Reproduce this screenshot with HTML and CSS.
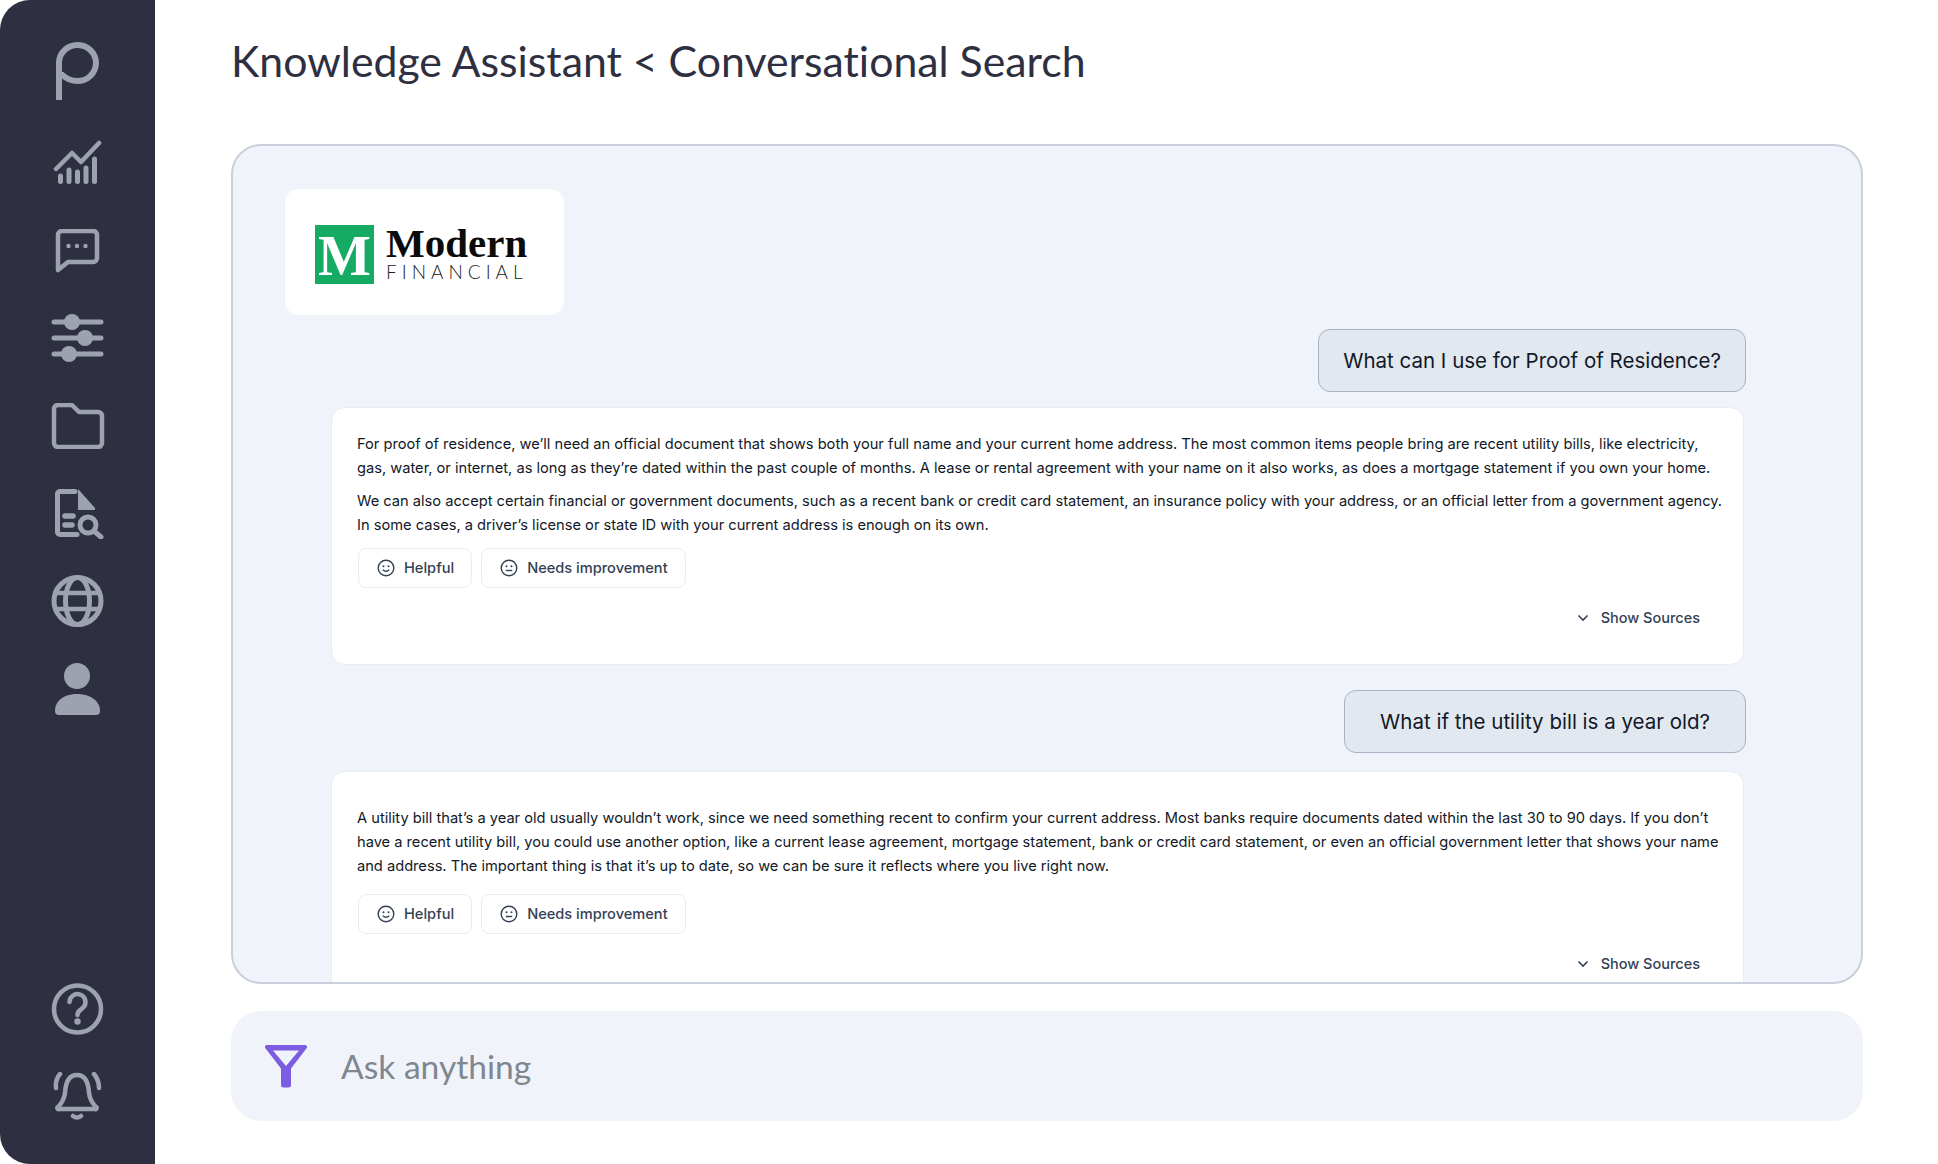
FILE: index.html
```html
<!DOCTYPE html>
<html>
<head>
    <meta charset="UTF-8">
    <title>Knowledge Assistant</title>

    <link rel="stylesheet" href="styles.css">
</head>
<body>
    <div class="app">
        <nav class="sidebar">
            <div class="nav-top">
                <svg class="nav-logo" width="155" height="58" viewBox="0 42 155 58">
                    <path class="line" stroke-width="6" stroke-linecap="butt" d="M59 100 V62 a18.5 18 0 1 1 18.5 19 q-9 0 -15 -6"></path>
                </svg>
                <svg class="nav-icon" width="155" height="46" viewBox="0 140 155 46">
                    <path class="line" stroke-width="4.500" d="M56 169 L72 153 L81 162 L99 143"></path>
                    <path class="line" stroke-width="5" d="M60.500 176 V181.500 M69 170 V181.500 M77.500 172 V181.500 M86 168 V181.500 M94.500 159 V181.500"></path>
                </svg>
                <svg class="nav-icon chat" width="155" height="44" viewBox="0 229 155 44">
                    <path class="line" stroke-width="4.500" d="M62 231 H93 a4 4 0 0 1 4 4 V258 a4 4 0 0 1 -4 4 H68 L58 270 V235 a4 4 0 0 1 4 -4z"></path>
                    <circle class="solid" cx="68.500" cy="246" r="2.200"></circle>
                    <circle class="solid" cx="77" cy="246" r="2.200"></circle>
                    <circle class="solid" cx="85.500" cy="246" r="2.200"></circle>
                </svg>
                <svg class="nav-icon sliders" width="155" height="50" viewBox="0 314 155 50">
                    <path class="line" stroke-width="5" d="M54 322 H101 M54 338 H101 M54 354 H101"></path>
                    <circle class="solid" cx="72" cy="322" r="8"></circle>
                    <circle class="solid" cx="85" cy="338" r="8"></circle>
                    <circle class="solid" cx="69" cy="354" r="8"></circle>
                </svg>
                <svg class="nav-icon folder" width="155" height="46" viewBox="0 403 155 46">
                    <path class="line" stroke-width="4.500" d="M58 405 H71 a3 3 0 0 1 2 1 L79 412 H98 a4 4 0 0 1 4 4 V443 a4 4 0 0 1 -4 4 H58 a4 4 0 0 1 -4 -4 V409 a4 4 0 0 1 4 -4z"></path>
                </svg>
                <svg class="nav-icon doc" width="155" height="50" viewBox="0 489 155 50">
                    <path class="line" stroke-width="5" d="M75 491.500 H60 a2.500 2.500 0 0 0 -2.500 2.500 V532 a2.500 2.500 0 0 0 2.500 2.500 H77"></path>
                    <path class="solid" d="M78 489 L95 508 V510 H78z"></path>
                    <path class="line" stroke-width="5.500" stroke-linecap="butt" d="M65 516 H73 M65 525 H72"></path>
                    <circle class="line" stroke-width="5" cx="88" cy="525" r="8"></circle>
                    <path class="line" stroke-width="5" d="M94 531 L101 537"></path>
                </svg>
                <svg class="nav-icon globe" width="155" height="52" viewBox="0 575 155 52">
                    <circle class="line" stroke-width="5" cx="77.500" cy="601" r="23.500"></circle>
                    <ellipse class="line" stroke-width="5" cx="77.500" cy="601" rx="12" ry="23.500"></ellipse>
                    <path class="line" stroke-width="4.500" d="M56 593 H99 M56 609 H99"></path>
                </svg>
                <svg class="nav-icon person" width="155" height="52" viewBox="0 663 155 52">
                    <circle class="solid" cx="77" cy="676" r="13"></circle>
                    <path class="solid" d="M55 711 C55 700 65 694 77 694 S100 700 100 711 a4 4 0 0 1 -4 4 H59 a4 4 0 0 1 -4 -4z"></path>
                </svg>
            </div>
            <div class="nav-bottom">
                <svg class="nav-icon" width="155" height="52" viewBox="0 983 155 52">
                    <circle class="line" stroke-width="4.500" cx="77.500" cy="1009" r="23.500"></circle>
                    <path class="line" stroke-width="4.500" d="M69.500 1002 a8 8 0 1 1 12 7 q-4 2.500 -4 6"></path>
                    <circle class="solid" cx="77.500" cy="1021.500" r="3.200"></circle>
                </svg>
                <svg class="nav-icon bell" width="155" height="50" viewBox="0 1072 155 50">
                    <path class="line" stroke-width="4.500" d="M58 1107 q6 -6 7 -14 q1 -18 12 -18 t12 18 q1 8 7 14 a1 1 0 0 1 -1 2 H59 a1 1 0 0 1 -1 -2z"></path>
                    <path class="line" stroke-width="4.500" d="M60 1074 q-5 6 -4 14 M94 1074 q5 6 5 14 M73 1116 q4 3 8 0"></path>
                </svg>
            </div>
        </nav>

        <main class="main">
            <h1 class="title">Knowledge Assistant &lt; Conversational Search</h1>

            <section class="panel">
                <div class="brand">
                    <div class="brand-mark">M</div>
                    <div class="brand-name">
                        <div class="brand-top">Modern</div>
                        <div class="brand-sub">FINANCIAL</div>
                    </div>
                </div>

                <div class="thread">
                    <div class="bubble bubble-a">What can I use for Proof of Residence?</div>
                    <article class="card card-a">
                        <p>For proof of residence, we’ll need an official document that shows both your full name and your current home address. The most common items people bring are recent utility bills, like electricity, gas, water, or internet, as long as they’re dated within the past couple of months. A lease or rental agreement with your name on it also works, as does a mortgage statement if you own your home.</p>
                        <p>We can also accept certain financial or government documents, such as a recent bank or credit card statement, an insurance policy with your address, or an official letter from a government agency. In some cases, a driver’s license or state ID with your current address is enough on its own.</p>
                        <div class="actions">
                            <button class="btn">
                                <svg width="18" height="18" viewBox="0 0 18 18"><circle cx="9" cy="9" r="7.800"></circle><circle class="eye" cx="6.500" cy="7.200" r="1"></circle><circle class="eye" cx="11.500" cy="7.200" r="1"></circle><path d="M5.800 10.800 q3.200 3 6.400 0"></path></svg>
                                Helpful
                            </button>
                            <button class="btn">
                                <svg width="18" height="18" viewBox="0 0 18 18"><circle cx="9" cy="9" r="7.800"></circle><circle class="eye" cx="6.500" cy="7.200" r="1"></circle><circle class="eye" cx="11.500" cy="7.200" r="1"></circle><path d="M5.800 11.500 H12.200"></path></svg>
                                Needs improvement
                            </button>
                        </div>
                        <div class="sources">
                            <svg width="12" height="8" viewBox="0 0 12 8"><path d="M1.500 1.500 L6 6 L10.500 1.500"></path></svg>
                            Show Sources
                        </div>
                    </article>

                    <div class="bubble bubble-b">What if the utility bill is a year old?</div>
                    <article class="card card-b">
                        <p>A utility bill that’s a year old usually wouldn’t work, since we need something recent to confirm your current address. Most banks require documents dated within the last 30 to 90 days. If you don’t have a recent utility bill, you could use another option, like a current lease agreement, mortgage statement, bank or credit card statement, or even an official government letter that shows your name and address. The important thing is that it’s up to date, so we can be sure it reflects where you live right now.</p>
                        <div class="actions">
                            <button class="btn">
                                <svg width="18" height="18" viewBox="0 0 18 18"><circle cx="9" cy="9" r="7.800"></circle><circle class="eye" cx="6.500" cy="7.200" r="1"></circle><circle class="eye" cx="11.500" cy="7.200" r="1"></circle><path d="M5.800 10.800 q3.200 3 6.400 0"></path></svg>
                                Helpful
                            </button>
                            <button class="btn">
                                <svg width="18" height="18" viewBox="0 0 18 18"><circle cx="9" cy="9" r="7.800"></circle><circle class="eye" cx="6.500" cy="7.200" r="1"></circle><circle class="eye" cx="11.500" cy="7.200" r="1"></circle><path d="M5.800 11.500 H12.200"></path></svg>
                                Needs improvement
                            </button>
                        </div>
                        <div class="sources">
                            <svg width="12" height="8" viewBox="0 0 12 8"><path d="M1.500 1.500 L6 6 L10.500 1.500"></path></svg>
                            Show Sources
                        </div>
                    </article>
                </div>
            </section>

            <div class="ask">
                <svg width="42" height="43" viewBox="0 0 42 43">
                    <path class="funnel" d="M2 0 H40 a2 2 0 0 1 1.600 3.200 L26 23.500 V40 a2.500 2.500 0 0 1 -2.500 2.500 H18.500 a2.500 2.500 0 0 1 -2.500 -2.500 V23.500 L0.400 3.200 A2 2 0 0 1 2 0z M8 5.500 L21 21 L34 5.500z"></path>
                </svg>
                <span class="ask-text">Ask anything</span>
            </div>
        </main>
    </div>
</body>
</html>
```

FILE: styles.css
```css
* {
    box-sizing: border-box;
}

html, body {
    margin: 0;
    height: 100%;
    background: #fff;
}

body {
    font-family: "Inter", "Liberation Sans", sans-serif;
    overflow: hidden;
}

.app {
    display: flex;
    height: 1164px;
}

.sidebar {
    width: 155px;
    flex: none;
    display: flex;
    flex-direction: column;
    justify-content: space-between;
    padding: 42px 0 42px;

    background: #2e3042;
    border-radius: 30px 0 0 30px;
}

.sidebar svg {
    display: block;
}

.nav-icon {
    margin-top: 40px;
}

.nav-top .chat {
    margin-top: 43px;
}

.nav-top .sliders {
    margin-top: 41px;
}

.nav-top .folder {
    margin-top: 39px;
}

.nav-top .doc {
    margin-top: 40px;
}

.nav-top .globe {
    margin-top: 36px;
}

.nav-top .person {
    margin-top: 36px;
}

.nav-bottom .bell {
    margin-top: 37px;
}

.line {
    fill: none;
    stroke: #9ca3af;
    stroke-linecap: round;
    stroke-linejoin: round;
}

.solid {
    fill: #9ca3af;
}

.main {
    flex: 1;
    display: flex;
    flex-direction: column;
    padding: 0 75px 0 76px;
}

.title {
    margin: 33px 0 0;
    height: 111px;

    color: #2e3042;
    font-family: "Lato", "Liberation Sans", sans-serif;
    font-size: 42.800px;
    font-weight: 400;
    font-variant-ligatures: none;
    line-height: 56px;
}

.panel {
    height: 840px;
    flex: none;
    padding: 43px 0 0 52px;
    overflow: hidden;

    background: #f0f3f9;
    border: 2px solid #c9cfdb;
    border-radius: 30px;
}

.brand {
    width: 279px;
    height: 126px;
    display: flex;
    align-items: center;
    gap: 12px;
    padding: 4px 0 0 30px;

    background: #fff;
    border-radius: 14px;
}

.brand-mark {
    width: 59px;
    height: 59px;

    color: #fff;
    background: #16ab63;
    font-family: "Liberation Serif", serif;
    font-size: 56px;
    font-weight: 700;
    line-height: 62px;
    text-align: center;
}

.brand-top {
    color: #0b0b0b;
    font-family: "Liberation Serif", serif;
    font-size: 41px;
    font-weight: 700;
    line-height: 34px;
}

.brand-sub {
    margin-top: 1px;

    color: #222;
    font-family: "Lato", sans-serif;
    font-size: 19px;
    font-weight: 300;
    letter-spacing: 5px;
    line-height: 22px;
}

.thread {
    display: flex;
    flex-direction: column;
    align-items: flex-end;
    width: 1461px;
    padding-left: 48px;
}

.bubble {
    height: 63px;
    display: flex;
    align-items: center;

    color: #111827;
    background: #e2e8f0;
    border: 1px solid #a9b2c3;
    border-radius: 12px;
    font-size: 20.500px;
}

.bubble-a {
    margin-top: 14px;
    padding: 0 24px;
}

.bubble-b {
    margin-top: 25px;
    padding: 0 35px;
}

.card {
    width: 100%;
    margin-right: 2px;
    padding: 0 19px 0 25px;
    flex: none;

    color: #111827;
    background: #fff;
    border: 1px solid #e8ecf3;
    border-radius: 14px;
    font-size: 14.650px;
    line-height: 24px;
}

.card-a {
    height: 258px;
    margin-top: 15px;
    padding-top: 24px;
}

.card-b {
    height: 240px;
    margin-top: 18px;
    padding-top: 34px;
}

.card p {
    margin: 0 0 9px;
}

.actions {
    display: flex;
    gap: 9px;
    margin-top: 11px;
}

.card-b .actions {
    margin-top: 16px;
}

.btn {
    height: 40px;
    display: flex;
    align-items: center;
    gap: 9px;
    padding: 0 17px 0 18px;
    margin-left: 1px;

    color: #334155;
    background: #fff;
    border: 1px solid #e8ecf3;
    border-radius: 8px;
    font-family: inherit;
    font-size: 14.600px;
    font-weight: 500;
}

.btn + .btn {
    margin-left: 0;
}

.btn svg circle,
.btn svg path {
    fill: none;
    stroke: #334155;
    stroke-width: 1.400;
}

.btn svg .eye {
    fill: #334155;
    stroke: none;
}

.sources {
    display: flex;
    align-items: center;
    justify-content: flex-end;
    gap: 12px;
    margin-top: 18px;
    padding-right: 24px;

    color: #334155;
    font-size: 14.500px;
    font-weight: 500;
}

.sources path {
    fill: none;
    stroke: #334155;
    stroke-width: 1.600;
}

.ask {
    height: 110px;
    flex: none;
    margin-top: 27px;
    display: flex;
    align-items: center;
    gap: 34px;
    padding: 0 0 0 34px;

    background: #f0f3f9;
    border-radius: 30px;
}

.funnel {
    fill: #7c5ce0;
    fill-rule: evenodd;
}

.ask-text {
    color: #7f8690;
    font-family: "Lato", "Liberation Sans", sans-serif;
    font-size: 33.600px;
    font-variant-ligatures: none;
}
```
